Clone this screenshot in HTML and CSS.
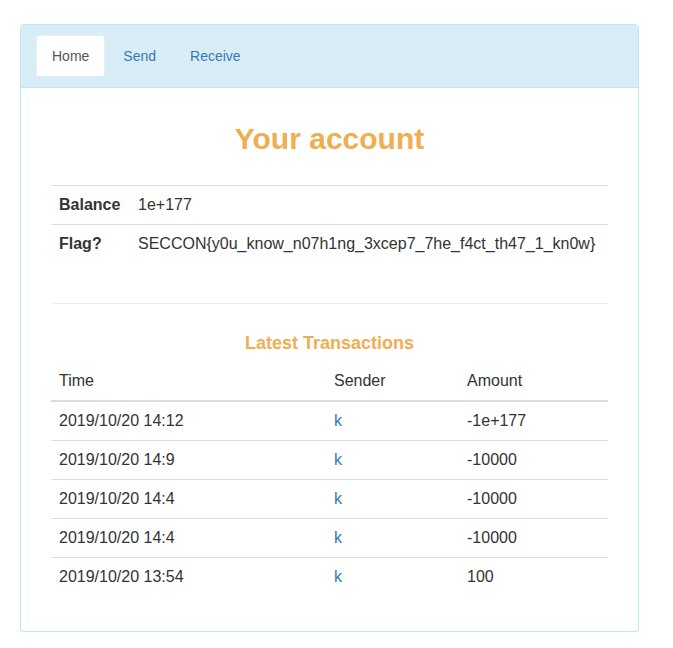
FILE: index.html
```html
<!DOCTYPE html>
<html>
<head>
<meta charset="utf-8">
<link rel="stylesheet" href="styles.css">
</head>
<body>
<div class="panel">
  <div class="panel-heading">
    <ul class="tabs">
      <li class="tab active"><a>Home</a></li>
      <li class="tab"><a>Send</a></li>
      <li class="tab"><a>Receive</a></li>
    </ul>
  </div>
  <div class="panel-body">
    <div class="container">
      <h2 class="title">Your account</h2>
      <table class="table info">
        <tbody>
          <tr><th class="label-col">Balance</th><td>1e+177</td></tr>
          <tr><th class="label-col">Flag?</th><td>SECCON{y0u_know_n07h1ng_3xcep7_7he_f4ct_th47_1_kn0w}</td></tr>
        </tbody>
      </table>
      <hr class="sep">
      <h4 class="subtitle">Latest Transactions</h4>
      <table class="table tx">
        <thead>
          <tr><th class="c-time">Time</th><th class="c-sender">Sender</th><th>Amount</th></tr>
        </thead>
        <tbody>
          <tr><td>2019/10/20 14:12</td><td><a class="link">k</a></td><td>-1e+177</td></tr>
          <tr><td>2019/10/20 14:9</td><td><a class="link">k</a></td><td>-10000</td></tr>
          <tr><td>2019/10/20 14:4</td><td><a class="link">k</a></td><td>-10000</td></tr>
          <tr><td>2019/10/20 14:4</td><td><a class="link">k</a></td><td>-10000</td></tr>
          <tr><td>2019/10/20 13:54</td><td><a class="link">k</a></td><td>100</td></tr>
        </tbody>
      </table>
    </div>
  </div>
</div>
</body>
</html>
```
FILE: styles.css
```css
* { box-sizing: border-box; }
html, body { margin: 0; padding: 0; background: #fff; }
body {
  font-family: "Liberation Sans", Arial, sans-serif;
  font-size: 16px;
  line-height: 22px;
  color: #333;
  padding: 24px 0 0 20px;
}
.panel {
  width: 619px;
  border: 1px solid #bce8f1;
  border-radius: 4px;
  box-shadow: 0 1px 1px rgba(0,0,0,.05);
  background: #fff;
}
.panel-heading {
  background: #d9edf7;
  border-bottom: 1px solid #bce8f1;
  border-radius: 3px 3px 0 0;
  padding: 10px 15px 11px 15px;
}
.tabs {
  list-style: none;
  margin: 0;
  padding: 0;
  display: flex;
}
.tab { margin-right: 2px; }
.tab a {
  display: block;
  padding: 10px 15px;
  font-size: 14px;
  line-height: 20px;
  color: #337ab7;
  border: 1px solid transparent;
  border-width: 1px 1px 0 1px;
  border-radius: 4px 4px 0 0;
}
.tab.active a {
  background: #fff;
  color: #555;
  border-color: #e8eef2;
}
.panel-body { padding: 15px; }
.container { padding: 0 15px; }
.title {
  text-align: center;
  color: #efae52;
  font-size: 30px;
  font-weight: bold;
  line-height: 33px;
  margin: 19px 0 30px;
}
.table {
  width: 100%;
  border-collapse: collapse;
  margin-bottom: 20px;
}
.table th, .table td {
  padding: 8px;
  line-height: 22px;
  text-align: left;
  vertical-align: top;
}
.table tbody tr td, .table tbody tr th { border-top: 1px solid #ddd; }
.info th { font-weight: bold; }
.label-col { width: 79px; }
.sep {
  border: 0;
  border-top: 1px solid #eee;
  margin: 40px 0 29px;
}
.subtitle {
  text-align: center;
  color: #efae52;
  font-size: 18px;
  font-weight: bold;
  line-height: 20px;
  margin: 8px 0 9px;
}
.tx { margin-bottom: 20px; }
.tx thead th {
  font-weight: normal;
  border-bottom: 2px solid #ddd;
}
.tx tbody tr:first-child td { border-top: 0; }
.c-time { width: 275px; }
.c-sender { width: 133px; }
.link { color: #337ab7; }
```
